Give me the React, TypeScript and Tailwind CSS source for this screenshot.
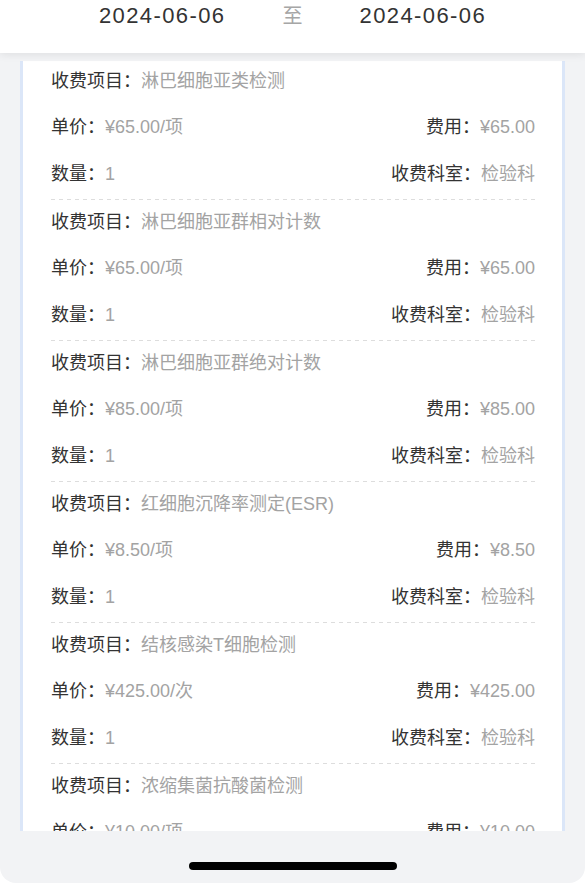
import React from "react";

type Item = { name: string; price: string; fee: string; qty: string; dept: string };

const items: Item[] = [
  { name: "淋巴细胞亚类检测", price: "¥65.00/项", fee: "¥65.00", qty: "1", dept: "检验科" },
  { name: "淋巴细胞亚群相对计数", price: "¥65.00/项", fee: "¥65.00", qty: "1", dept: "检验科" },
  { name: "淋巴细胞亚群绝对计数", price: "¥85.00/项", fee: "¥85.00", qty: "1", dept: "检验科" },
  { name: "红细胞沉降率测定(ESR)", price: "¥8.50/项", fee: "¥8.50", qty: "1", dept: "检验科" },
  { name: "结核感染T细胞检测", price: "¥425.00/次", fee: "¥425.00", qty: "1", dept: "检验科" },
  { name: "浓缩集菌抗酸菌检测", price: "¥10.00/项", fee: "¥10.00", qty: "1", dept: "检验科" },
];

function Field({ label, value }: { label: string; value: string }) {
  return (
    <div className="whitespace-nowrap">
      <span className="text-[#333333]">{label}：</span>
      <span className="text-[#a3a3a3]">{value}</span>
    </div>
  );
}

export default function App() {
  return (
    <div
      className="w-[585px] h-[883px] bg-white"
      style={{ fontFamily: '"Liberation Sans", "Noto Sans CJK SC", sans-serif' }}
    >
      <div className="relative w-full h-full bg-[#f2f3f5] rounded-b-[16px] overflow-hidden flex flex-col">
        <div className="relative z-10 h-[53px] shrink-0 bg-white shadow-[0_2px_8px_rgba(0,0,0,0.08)] flex justify-center items-start pt-[3px] gap-[57px]">
          <span className="text-[22px] leading-[26px] tracking-[1.4px] text-[#333333]">2024-06-06</span>
          <span className="text-[20px] leading-[26px] text-[#a6a6a6]">至</span>
          <span className="text-[22px] leading-[26px] tracking-[1.4px] text-[#333333]">2024-06-06</span>
        </div>
        <div className="flex-1 min-h-0 pt-[8px] px-[20px]">
          <div className="h-[770px] bg-white border-x-[3px] border-[#dbe6f8] overflow-hidden pl-[28px] pr-[27px] pt-[8px] text-[18px] leading-[24px]">
            {items.map((it, i) => (
              <div key={i} className={i === 0 ? "" : "pt-[10px]"}>
                <Field label="收费项目" value={it.name} />
                <div className="mt-[22px] flex justify-between">
                  <Field label="单价" value={it.price} />
                  <Field label="费用" value={it.fee} />
                </div>
                <div className="mt-[23px] flex justify-between">
                  <Field label="数量" value={it.qty} />
                  <Field label="收费科室" value={it.dept} />
                </div>
                <div className="mt-[13px] h-px bg-[linear-gradient(to_right,#dddddd_50%,transparent_50%)] bg-[length:8px_1px]" />
              </div>
            ))}
          </div>
        </div>
        <div className="h-[52px] shrink-0 flex justify-center items-start pt-[31px]">
          <div className="w-[208px] h-[8px] rounded-full bg-black" />
        </div>
      </div>
    </div>
  );
}
